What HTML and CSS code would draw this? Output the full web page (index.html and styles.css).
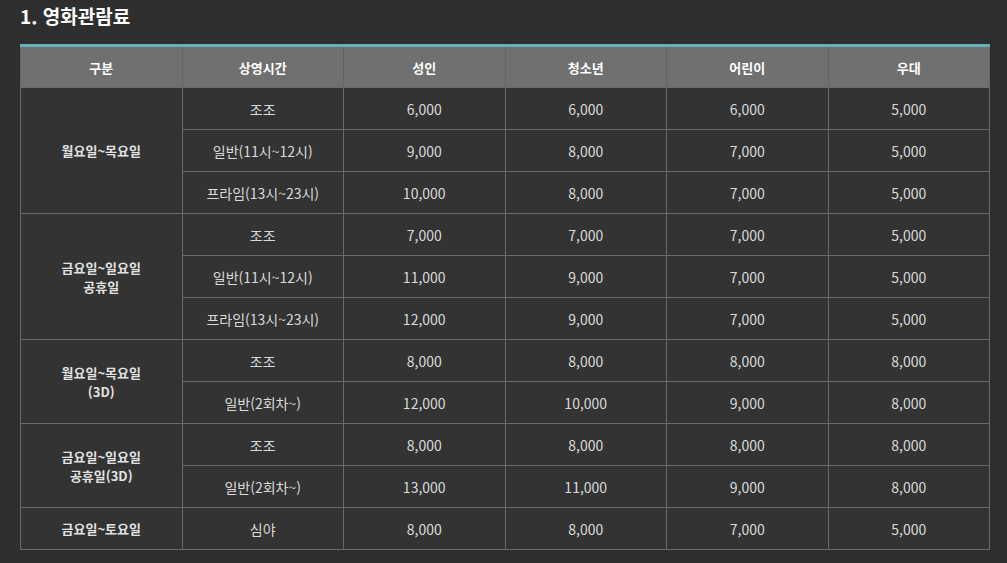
FILE: index.html
```html
<!DOCTYPE html>
<html lang="ko">
<head>
<meta charset="utf-8">
<link rel="stylesheet" href="styles.css">
</head>
<body>
<div class="page">
  <h2 class="title">1. 영화관람료</h2>
  <table class="fee">
    <thead>
      <tr><th>구분</th><th>상영시간</th><th>성인</th><th>청소년</th><th>어린이</th><th>우대</th></tr>
    </thead>
    <tbody>
      <tr><td class="day" rowspan="3">월요일~목요일</td><td>조조</td><td>6,000</td><td>6,000</td><td>6,000</td><td>5,000</td></tr>
      <tr><td>일반(11시~12시)</td><td>9,000</td><td>8,000</td><td>7,000</td><td>5,000</td></tr>
      <tr><td>프라임(13시~23시)</td><td>10,000</td><td>8,000</td><td>7,000</td><td>5,000</td></tr>
      <tr><td class="day" rowspan="3">금요일~일요일<br>공휴일</td><td>조조</td><td>7,000</td><td>7,000</td><td>7,000</td><td>5,000</td></tr>
      <tr><td>일반(11시~12시)</td><td>11,000</td><td>9,000</td><td>7,000</td><td>5,000</td></tr>
      <tr><td>프라임(13시~23시)</td><td>12,000</td><td>9,000</td><td>7,000</td><td>5,000</td></tr>
      <tr><td class="day" rowspan="2">월요일~목요일<br>(3D)</td><td>조조</td><td>8,000</td><td>8,000</td><td>8,000</td><td>8,000</td></tr>
      <tr><td>일반(2회차~)</td><td>12,000</td><td>10,000</td><td>9,000</td><td>8,000</td></tr>
      <tr><td class="day" rowspan="2">금요일~일요일<br>공휴일(3D)</td><td>조조</td><td>8,000</td><td>8,000</td><td>8,000</td><td>8,000</td></tr>
      <tr><td>일반(2회차~)</td><td>13,000</td><td>11,000</td><td>9,000</td><td>8,000</td></tr>
      <tr><td class="day">금요일~토요일</td><td>심야</td><td>8,000</td><td>8,000</td><td>7,000</td><td>5,000</td></tr>
    </tbody>
  </table>
</div>
</body>
</html>
```

FILE: styles.css
```css
html, body {
  margin: 0;
  padding: 0;
  background: #2e2e2e;
}
body {
  font-family: "Noto Sans CJK KR", "Noto Sans", sans-serif;
  color: #dcdcdc;
}
.page {
  padding: 0 18px 0 20px;
}
.title {
  margin: 0 0 12px 0;
  font-size: 19px;
  line-height: 32px;
  font-weight: 700;
  color: #ffffff;
}
.fee {
  width: 970px;
  border-collapse: collapse;
  table-layout: fixed;
  border-top: 3px solid #62b1bb;
  background: #333333;
}
.fee th {
  height: 40px;
  padding: 0;
  background: #707070;
  color: #ffffff;
  font-size: 13px;
  font-weight: 700;
  border-left: 1px solid #646464;
  border-right: 1px solid #646464;
  text-align: center;
  vertical-align: middle;
}
.fee td {
  height: 41px;
  padding: 0;
  font-size: 14px;
  line-height: 20px;
  text-align: center;
  vertical-align: middle;
  border: 1px solid #6a6a6a;
  color: #dadada;
}
.fee td.day {
  font-size: 13px;
  line-height: 19px;
  font-weight: 700;
  color: #e2e2e2;
}
```
